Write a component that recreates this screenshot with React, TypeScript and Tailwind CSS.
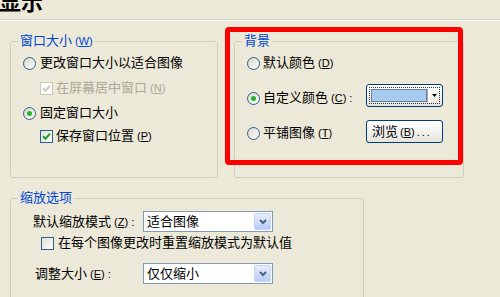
import React from "react";

function Radio({ checked }: { checked?: boolean }) {
  return (
    <span className="w-[13px] h-[13px] shrink-0 rounded-full border border-[#2f5f8f] bg-linear-to-br from-[#d8d6cb] to-white flex items-center justify-center">
      {checked && <span className="w-[5px] h-[5px] rounded-full bg-[#28b228]" />}
    </span>
  );
}

function Check({ checked, disabled }: { checked?: boolean; disabled?: boolean }) {
  return (
    <span
      className={
        disabled
          ? "w-[13px] h-[13px] shrink-0 border border-[#cac8bb] bg-white flex items-center justify-center"
          : "w-[13px] h-[13px] shrink-0 border border-[#2f5f8f] bg-linear-to-br from-[#e0ded5] to-white flex items-center justify-center"
      }
    >
      {checked && (
        <svg width="11" height="11" viewBox="0 0 11 11">
          <path
            d="M2 5.2 L4.4 7.8 L9 2.8"
            fill="none"
            stroke={disabled ? "#cac8bb" : "#21a121"}
            strokeWidth="2"
          />
        </svg>
      )}
    </span>
  );
}

function Mn({ k, colon }: { k: string; colon?: boolean }) {
  return (
    <span className="text-[11px] ml-[3px]">
      (<u>{k}</u>){colon ? " :" : ""}
    </span>
  );
}

function Select({ text }: { text: string }) {
  return (
    <div className="w-[130px] h-[21px] border border-[#7f9db9] bg-white flex items-center">
      <span className="flex-1 pl-[3px]">{text}</span>
      <span className="w-[17px] h-[17px] mr-[1px] rounded-[2px] bg-linear-to-b from-[#e6eefd] to-[#b7cbf6] border border-[#c3d3fd] flex items-center justify-center">
        <svg width="8" height="6" viewBox="0 0 8 6">
          <path d="M1 1 L4 4 L7 1" fill="none" stroke="#4d6185" strokeWidth="2" />
        </svg>
      </span>
    </div>
  );
}

function ColorPicker() {
  return (
    <div className="w-[77px] h-[23px] rounded-[3px] border border-[#003c74] bg-linear-to-b from-white to-[#e6e5de] p-[2px]">
      <div className="h-full border border-dotted border-[#333] flex p-[1px]">
        <div className="flex-1 bg-[#a6caf0] border border-[#6b7d99]" />
        <div className="w-[3px] border-l border-[#aaa] bg-white" />
        <div className="w-[8px] flex items-center justify-center">
          <svg width="5" height="3" viewBox="0 0 5 3">
            <path d="M0 0 L5 0 L2.5 3 Z" fill="#000" />
          </svg>
        </div>
      </div>
    </div>
  );
}

function Button() {
  return (
    <div className="w-[77px] h-[23px] rounded-[3px] border border-[#003c74] bg-linear-to-b from-white to-[#e6e5de] flex items-center pl-[5px]">
      <span>浏览</span>
      <span className="text-[11px] ml-[2px]">
        (<u>B</u>)<span className="tracking-[2px] ml-[2px]">...</span>
      </span>
    </div>
  );
}

export default function App() {
  return (
    <div className="relative w-[500px] h-[297px] overflow-hidden bg-[#ece9d8] font-['Liberation_Sans','Noto_Sans_CJK_SC',sans-serif] text-[13px] leading-[16px] text-black">
      <div className="h-[20px] flex flex-col border-b border-[#d2cfbf]">
        <div className="text-[22px] font-bold leading-none mt-[-8px] ml-[-1px]">显示</div>
      </div>
      <div className="h-[1px] bg-white" />

      <div className="flex pl-[10px] gap-[16px] mt-[12px]">
        <fieldset className="w-[208px] h-[145px] border border-[#d0d0bf] rounded-[3px]">
          <legend className="ml-[7px] px-[2px] text-[#0046d5]">
            窗口大小<Mn k="W" />
          </legend>
          <div className="pl-[12px] pt-[2px]">
            <div className="h-[24px] flex items-center gap-[4px]">
              <Radio />
              <span>更改窗口大小以适合图像</span>
            </div>
            <div className="h-[26px] flex items-center gap-[3px] pl-[17px] text-[#aca899]">
              <Check checked disabled />
              <span>
                在屏幕居中窗口<Mn k="N" />
              </span>
            </div>
            <div className="h-[24px] flex items-center gap-[4px]">
              <Radio checked />
              <span>固定窗口大小</span>
            </div>
            <div className="h-[22px] flex items-center gap-[3px] pl-[17px]">
              <Check checked />
              <span>
                保存窗口位置<Mn k="P" />
              </span>
            </div>
          </div>
        </fieldset>

        <fieldset className="w-[230px] h-[145px] border border-[#d0d0bf] rounded-[3px]">
          <legend className="ml-[7px] px-[2px] text-[#0046d5]">背景</legend>
          <div className="pl-[12px] pt-[2px]">
            <div className="h-[24px] flex items-center gap-[3px]">
              <Radio />
              <span>
                默认颜色<Mn k="D" />
              </span>
            </div>
            <div className="mt-[9px] h-[23px] flex items-center">
              <div className="w-[119px] flex items-center gap-[3px] pt-[5px]">
                <Radio checked />
                <span>
                  自定义颜色<Mn k="C" colon />
                </span>
              </div>
              <ColorPicker />
            </div>
            <div className="mt-[13px] h-[23px] flex items-center">
              <div className="w-[119px] flex items-center gap-[3px] pt-[3px]">
                <Radio />
                <span>
                  平铺图像<Mn k="T" />
                </span>
              </div>
              <Button />
            </div>
          </div>
        </fieldset>
      </div>

      <div className="pl-[10px] mt-[12px]">
        <fieldset className="w-[354px] h-[120px] border border-[#d0d0bf] rounded-[3px]">
          <legend className="ml-[7px] px-[2px] text-[#0046d5]">缩放选项</legend>
          <div className="pt-[5px]">
            <div className="h-[21px] flex items-center pl-[22px]">
              <span className="w-[110px]">
                默认缩放模式<Mn k="Z" colon />
              </span>
              <Select text="适合图像" />
            </div>
            <div className="h-[22px] flex items-center gap-[4px] pl-[30px]">
              <Check />
              <span>在每个图像更改时重置缩放模式为默认值</span>
            </div>
            <div className="mt-[9px] h-[21px] flex items-center pl-[24px]">
              <span className="w-[108px]">
                调整大小<Mn k="E" colon />
              </span>
              <Select text="仅仅缩小" />
            </div>
          </div>
        </fieldset>
      </div>

      <div className="absolute left-[225px] top-[27px] w-[238px] h-[138px] border-[5px] border-[#ff0000] rounded-[4px]" />
    </div>
  );
}
